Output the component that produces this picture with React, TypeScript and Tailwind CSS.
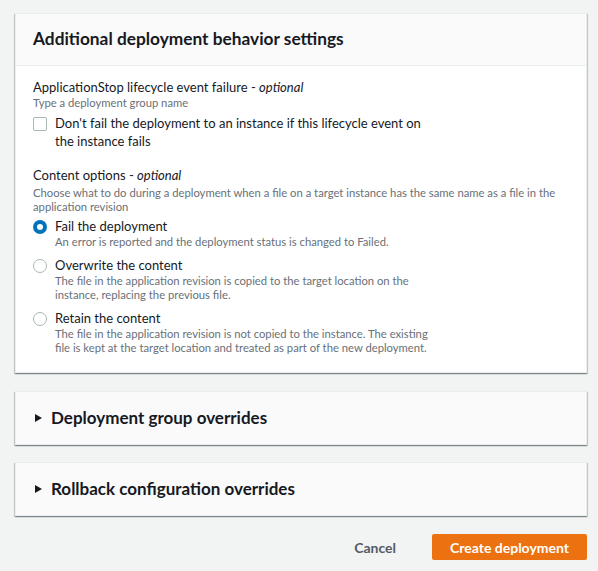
import React from "react";

const font = { fontFamily: 'Lato, "Liberation Sans", sans-serif' };

const cardShadow =
  "shadow-[0_1px_1px_0_rgba(0,28,36,0.3),1px_1px_1px_0_rgba(0,28,36,0.15),-1px_1px_1px_0_rgba(0,28,36,0.15)]";

const Radio = ({ checked }: { checked?: boolean }) =>
  checked ? (
    <span className="mt-[2px] flex h-[14px] w-[14px] shrink-0 items-center justify-center rounded-full bg-[#0073bb]">
      <span className="h-[6px] w-[6px] rounded-full bg-white" />
    </span>
  ) : (
    <span className="mt-[2px] h-[14px] w-[14px] shrink-0 rounded-full border border-[#aab7b8] bg-white" />
  );

const RadioOption = ({
  checked,
  label,
  lines,
}: {
  checked?: boolean;
  label: string;
  lines: string[];
}) => (
  <div className="flex gap-[8px]">
    <Radio checked={checked} />
    <div>
      <div className="text-[13px] leading-[17px] text-[#16191f]">{label}</div>
      <div className="text-[11.25px] leading-[14px] text-[#687078]">
        {lines.map((l) => (
          <div key={l} className="whitespace-nowrap">
            {l}
          </div>
        ))}
      </div>
    </div>
  </div>
);

const Collapsed = ({ title }: { title: string }) => (
  <div className={`flex h-[54px] items-center gap-[9px] border border-[#eaeded] bg-[#fafafa] pl-[19px] ${cardShadow}`}>
    <svg width="7" height="8" viewBox="0 0 7 8" className="shrink-0">
      <path d="M0 0 L7 4 L0 8 Z" fill="#16191f" />
    </svg>
    <span className="text-[17px] font-bold text-[#16191f]">{title}</span>
  </div>
);

export default function App() {
  return (
    <div className="min-h-screen bg-[#f2f3f3] pb-[10px] pl-[15px] pr-[11px] pt-[13px]" style={font}>
      <div className={`border border-[#eaeded] bg-white ${cardShadow}`}>
        <div className="flex h-[52px] items-center border-b border-[#eaeded] bg-[#fafafa] px-[17px]">
          <h2 className="pb-px text-[17.3px] font-bold text-[#16191f]">Additional deployment behavior settings</h2>
        </div>
        <div className="px-[17px] pb-[17px] pt-[13px]">
          <div className="text-[13px] leading-[17px] text-[#16191f]">
            ApplicationStop lifecycle event failure - <i>optional</i>
          </div>
          <div className="text-[11.25px] leading-[14px] text-[#687078]">Type a deployment group name</div>
          <div className="mt-[4px] flex gap-[8px]">
            <span className="mt-[3px] h-[14px] w-[14px] shrink-0 rounded-[2px] border border-[#aab7b8] bg-white" />
            <div className="text-[13px] leading-[18px] text-[#16191f]">
              <div className="whitespace-nowrap">Don't fail the deployment to an instance if this lifecycle event on</div>
              <div>the instance fails</div>
            </div>
          </div>

          <div className="mt-[17px] text-[13px] leading-[17px] text-[#16191f]">
            Content options - <i>optional</i>
          </div>
          <div className="mt-[2px] text-[11.25px] leading-[14px] text-[#687078]">
            <div className="whitespace-nowrap">
              Choose what to do during a deployment when a file on a target instance has the same name as a file in the
            </div>
            <div>application revision</div>
          </div>
          <div className="mt-[4px] flex flex-col gap-[8px]">
            <RadioOption
              checked
              label="Fail the deployment"
              lines={["An error is reported and the deployment status is changed to Failed."]}
            />
            <RadioOption
              label="Overwrite the content"
              lines={[
                "The file in the application revision is copied to the target location on the",
                "instance, replacing the previous file.",
              ]}
            />
            <RadioOption
              label="Retain the content"
              lines={[
                "The file in the application revision is not copied to the instance. The existing",
                "file is kept at the target location and treated as part of the new deployment.",
              ]}
            />
          </div>
        </div>
      </div>

      <div className="mt-[18px]">
        <Collapsed title="Deployment group overrides" />
      </div>
      <div className="mt-[17px]">
        <Collapsed title="Rollback configuration overrides" />
      </div>

      <div className="mt-[18px] flex items-center justify-end gap-[36px]">
        <button className="text-[14px] font-bold text-[#545b64]">Cancel</button>
        <button className="h-[26px] w-[155px] rounded-[2px] bg-[#ec7211] text-[14px] font-bold text-white">
          Create deployment
        </button>
      </div>
    </div>
  );
}
